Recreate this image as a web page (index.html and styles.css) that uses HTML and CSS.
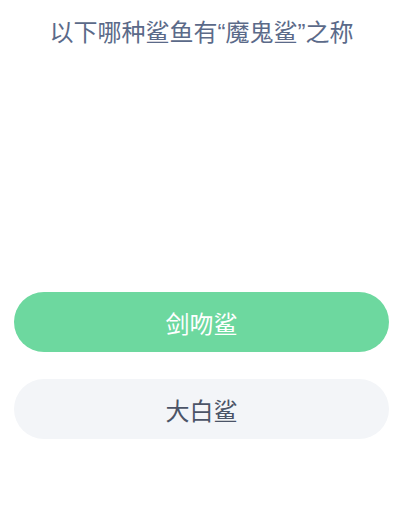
FILE: index.html
```html
<!DOCTYPE html>
<html lang="zh-CN">
<head>
<meta charset="utf-8">
<title>Quiz</title>
<link rel="stylesheet" href="styles.css">
</head>
<body>
<main class="quiz">
  <h1 class="question">以下哪种鲨鱼有“魔鬼鲨”之称</h1>
  <div class="options">
    <button class="option option-correct">剑吻鲨</button>
    <button class="option option-default">大白鲨</button>
  </div>
</main>
</body>
</html>
```
FILE: styles.css
```css
html, body {
  margin: 0;
  padding: 0;
  background: #ffffff;
}
body {
  width: 397px;
  height: 519px;
  overflow: hidden;
  font-family: "Liberation Sans", "Noto Sans CJK SC", sans-serif;
}
.quiz {
  display: flex;
  flex-direction: column;
  padding: 16px 8px 0 14px;
}
.question {
  margin: 0;
  font-size: 24px;
  font-weight: 400;
  line-height: 34px;
  color: #5b6a89;
  text-align: center;
  letter-spacing: 0;
}
.options {
  display: flex;
  flex-direction: column;
  gap: 27px;
  margin-top: 242px;
}
.option {
  border: none;
  height: 60px;
  border-radius: 30px;
  font-family: inherit;
  font-size: 24px;
  font-weight: 400;
  display: flex;
  align-items: center;
  justify-content: center;
  padding: 0;
}
.option-correct {
  background: #6dd89f;
  color: #ffffff;
}
.option-default {
  background: #f3f5f8;
  color: #4b5467;
}
```
